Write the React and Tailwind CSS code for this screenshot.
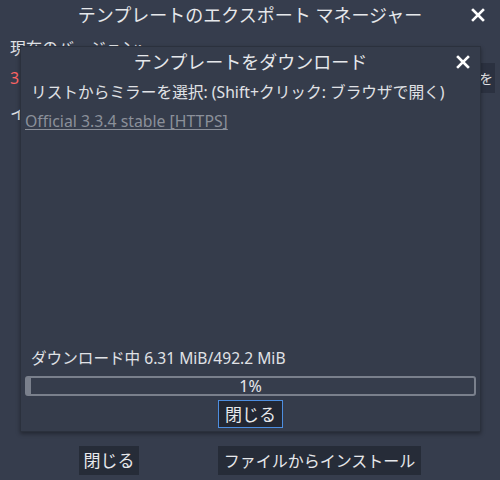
import React from "react";

const font = { fontFamily: '"Noto Sans", "Noto Sans CJK JP", sans-serif' };

function CloseIcon({ className }) {
  return (
    <svg viewBox="0 0 16 16" className={className} fill="none" stroke="currentColor" strokeWidth="2.6" strokeLinecap="square">
      <path d="M3 3 L13 13 M13 3 L3 13" />
    </svg>
  );
}

function DownloadDialog() {
  return (
    <div className="absolute left-[20px] top-[46px] w-[461px] h-[386px] bg-[#353c4b] border border-[#2b313d] shadow-[0_2px_4px_rgba(0,0,0,0.35)] flex flex-col">
      {/* title */}
      <div className="relative h-[30px] flex items-center justify-center text-[18px] text-[#e6e8eb]">
        <span>テンプレートをダウンロード</span>
        <CloseIcon className="absolute right-[9px] top-[7px] w-[16px] h-[16px] text-white" />
      </div>
      <div className="px-[10px] pt-[1px] text-[15.7px] text-[#e0e2e6] leading-[28px] whitespace-nowrap">
        リストからミラーを選択: (Shift+クリック: ブラウザで開く)
      </div>
      <div className="px-[4px] mt-[5px] text-[15.8px] leading-[20px] text-[#8b909a] underline decoration-1 underline-offset-2">
        Official 3.3.4 stable [HTTPS]
      </div>

      <div className="flex-1" />

      <div className="px-[10px] text-[15.6px] leading-[24px] text-[#e0e2e6]">
        ダウンロード中 6.31 MiB/492.2 MiB
      </div>
      <div className="mx-[4px] mt-[6px] relative h-[20px] rounded-[3px] border-2 border-[#7a808c] bg-[#363d4c] flex items-center justify-center">
        <div className="absolute left-0 top-0 bottom-0 w-[4px] bg-[#7a808c]" />
        <span className="relative text-[16px] leading-none text-[#e6e8eb]">1%</span>
      </div>
      <div className="flex justify-center mt-[4px] mb-[3px]">
        <button className="h-[28px] px-[6px] bg-[#222733] border border-[#4d8ee0] text-[17px] leading-none text-[#e6e8eb]">
          閉じる
        </button>
      </div>
    </div>
  );
}

export default function App() {
  return (
    <div style={font} className="relative w-[500px] h-[480px] bg-[#363d4d] overflow-hidden flex flex-col">
      {/* outer title */}
      <div className="relative h-[30px] flex items-center justify-center text-[18px] text-[#e6e8eb]">
        <span>テンプレートのエクスポート マネージャー</span>
        <CloseIcon className="absolute right-[14px] top-[7px] w-[16px] h-[16px] text-white" />
      </div>
      <div className="px-[10px] pt-[3px] text-[16px] leading-[30px] text-[#e0e2e6]">現在のバージョン:</div>
      <div className="flex items-center justify-between pl-[10px] pr-[5px]">
        <span className="text-[16px] text-[#ff6464]">3.3.4.stable</span>
        <div className="w-[18px] h-[30px] bg-[#2b3140] flex items-center justify-center text-[#e0e2e6] text-[14px]">を</div>
      </div>
      <div className="px-[10px] pt-[8px] text-[16px] leading-[24px] text-[#e0e2e6]">インストール済みバージョン:</div>

      <div className="flex-1" />

      <div className="flex items-center pb-[5px]">
        <button className="ml-[79px] h-[29px] w-[60px] bg-[#262c38] text-[17px] text-[#e6e8eb] whitespace-nowrap">閉じる</button>
        <button className="ml-[79px] h-[29px] w-[203px] bg-[#262c38] text-[16px] text-[#e6e8eb] whitespace-nowrap">ファイルからインストール</button>
      </div>

      <DownloadDialog />
    </div>
  );
}
